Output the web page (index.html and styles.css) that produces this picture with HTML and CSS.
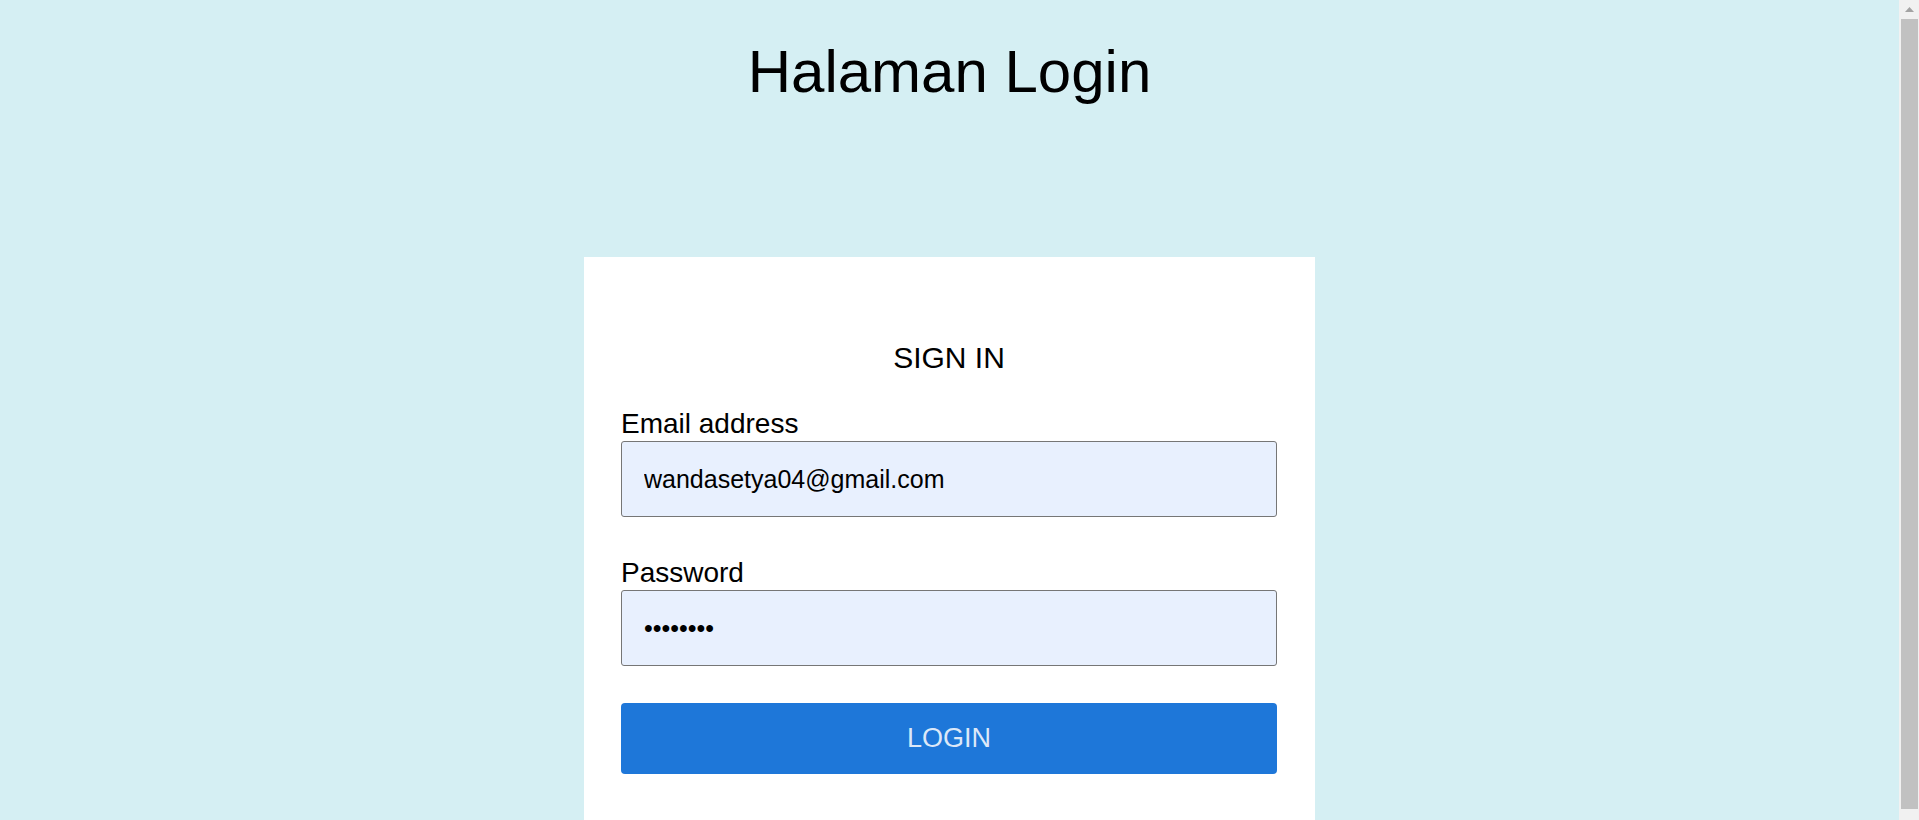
FILE: index.html
```html
<!DOCTYPE html>
<html lang="id">
<head>
<meta charset="utf-8">
<title>Halaman Login</title>
<link rel="stylesheet" href="styles.css">
</head>
<body class="viewport">
  <div class="page">
    <h1 class="page-title">Halaman Login</h1>
    <main class="card">
      <h2 class="card-title">SIGN IN</h2>
      <form class="login-form">
        <div class="field">
          <label class="field-label" for="email">Email address</label>
          <input class="field-input" id="email" type="email" value="wandasetya04@gmail.com">
        </div>
        <div class="field">
          <label class="field-label" for="password">Password</label>
          <input class="field-input" id="password" type="password" value="12345678">
        </div>
        <button class="login-button" type="button">LOGIN</button>
      </form>
    </main>
  </div>
  <div class="scrollbar" aria-hidden="true">
    <span class="scroll-arrow"><span class="scroll-arrow-glyph"></span></span>
    <span class="scroll-thumb"></span>
  </div>
</body>
</html>
```

FILE: styles.css
```css
html {
  background: #d5eff3;
}

body {
  margin: 0;
  background: #d5eff3;
  font-family: "Liberation Sans", Arial, sans-serif;
  color: #000;
}

.viewport {
  display: flex;
  align-items: flex-start;
}

.page {
  flex: 1;
  min-width: 0;
}

.scrollbar {
  flex: 0 0 20px;
  height: 100vh;
  display: flex;
  flex-direction: column;
  background: #f1f1f1;
}

.scroll-arrow {
  height: 17px;
  display: flex;
  justify-content: center;
  padding-top: 7px;
  box-sizing: border-box;
  padding-left: 1px;
}

.scroll-arrow-glyph {
  width: 9px;
  height: 5px;
  background: #a3a3a3;
  clip-path: polygon(50% 0, 100% 100%, 0 100%);
}

.scroll-thumb {
  height: 790px;
  margin: 2px 1px 0 2px;
  background: #c1c1c1;
}

.page-title {
  margin: 37px 0 0;
  font-size: 60px;
  font-weight: 400;
  text-align: center;
}

.card {
  box-sizing: border-box;
  width: 731px;
  margin: 151px auto 0;
  padding: 84px 38px 56px 37px;
  background: #fff;
}

.card-title {
  margin: 0 0 33px;
  font-size: 30px;
  font-weight: 400;
  text-align: center;
}

.login-form {
  display: flex;
  flex-direction: column;
}

.field {
  display: flex;
  flex-direction: column;
  margin-bottom: 40px;
}

.field + .field {
  margin-bottom: 37px;
}

.field-label {
  font-size: 28px;
  margin-bottom: 1px;
}

.field-input {
  box-sizing: border-box;
  height: 76px;
  padding: 0 22px;
  border: 1px solid #767676;
  border-radius: 3px;
  background: #e8f0fe;
  font-family: "Liberation Sans", Arial, sans-serif;
  font-size: 25px;
  color: #000;
  outline: none;
}

.login-button {
  height: 71px;
  border: none;
  border-radius: 4px;
  background: #1e77d9;
  color: #dce8f8;
  font-family: "Liberation Sans", Arial, sans-serif;
  font-size: 27px;
  cursor: pointer;
}
```
